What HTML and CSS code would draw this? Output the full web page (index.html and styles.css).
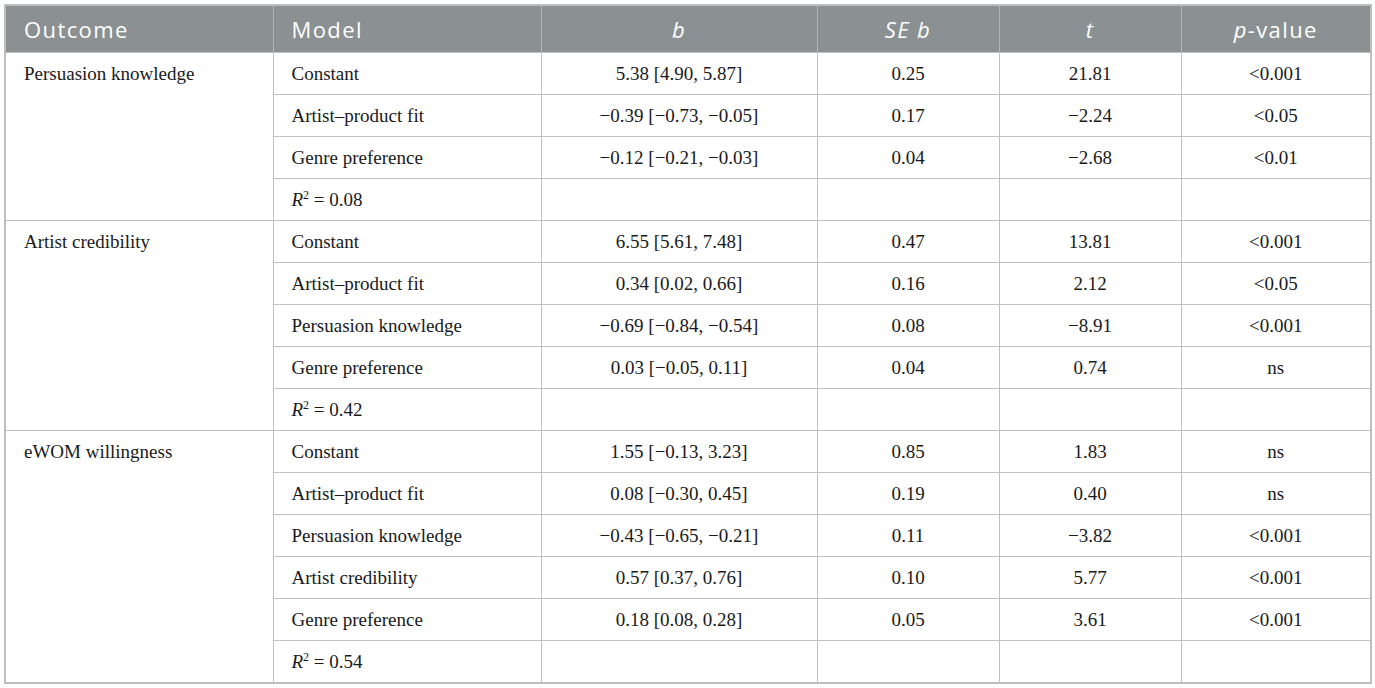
FILE: index.html
```html
<!DOCTYPE html>
<html>
<head>
<meta charset="utf-8">
<link rel="stylesheet" href="styles.css">
</head>
<body>
<table class="results">
  <colgroup>
    <col class="c-outcome"><col class="c-model"><col class="c-b"><col class="c-se"><col class="c-t"><col class="c-p">
  </colgroup>
  <thead>
    <tr>
      <th class="left">Outcome</th>
      <th class="left">Model</th>
      <th><i>b</i></th>
      <th><i>SE b</i></th>
      <th><i>t</i></th>
      <th><i>p</i>-value</th>
    </tr>
  </thead>
  <tbody>
    <tr><td class="outcome" rowspan="4">Persuasion knowledge</td><td class="left">Constant</td><td>5.38 [4.90, 5.87]</td><td>0.25</td><td>21.81</td><td>&lt;0.001</td></tr>
    <tr><td class="left">Artist–product fit</td><td>−0.39 [−0.73, −0.05]</td><td>0.17</td><td>−2.24</td><td>&lt;0.05</td></tr>
    <tr><td class="left">Genre preference</td><td>−0.12 [−0.21, −0.03]</td><td>0.04</td><td>−2.68</td><td>&lt;0.01</td></tr>
    <tr><td class="left"><i>R</i><sup>2</sup> = 0.08</td><td></td><td></td><td></td><td></td></tr>

    <tr><td class="outcome" rowspan="5">Artist credibility</td><td class="left">Constant</td><td>6.55 [5.61, 7.48]</td><td>0.47</td><td>13.81</td><td>&lt;0.001</td></tr>
    <tr><td class="left">Artist–product fit</td><td>0.34 [0.02, 0.66]</td><td>0.16</td><td>2.12</td><td>&lt;0.05</td></tr>
    <tr><td class="left">Persuasion knowledge</td><td>−0.69 [−0.84, −0.54]</td><td>0.08</td><td>−8.91</td><td>&lt;0.001</td></tr>
    <tr><td class="left">Genre preference</td><td>0.03 [−0.05, 0.11]</td><td>0.04</td><td>0.74</td><td>ns</td></tr>
    <tr><td class="left"><i>R</i><sup>2</sup> = 0.42</td><td></td><td></td><td></td><td></td></tr>

    <tr><td class="outcome" rowspan="6">eWOM willingness</td><td class="left">Constant</td><td>1.55 [−0.13, 3.23]</td><td>0.85</td><td>1.83</td><td>ns</td></tr>
    <tr><td class="left">Artist–product fit</td><td>0.08 [−0.30, 0.45]</td><td>0.19</td><td>0.40</td><td>ns</td></tr>
    <tr><td class="left">Persuasion knowledge</td><td>−0.43 [−0.65, −0.21]</td><td>0.11</td><td>−3.82</td><td>&lt;0.001</td></tr>
    <tr><td class="left">Artist credibility</td><td>0.57 [0.37, 0.76]</td><td>0.10</td><td>5.77</td><td>&lt;0.001</td></tr>
    <tr><td class="left">Genre preference</td><td>0.18 [0.08, 0.28]</td><td>0.05</td><td>3.61</td><td>&lt;0.001</td></tr>
    <tr><td class="left"><i>R</i><sup>2</sup> = 0.54</td><td></td><td></td><td></td><td></td></tr>
  </tbody>
</table>
</body>
</html>
```
FILE: styles.css
```css
html, body {
  margin: 0;
  padding: 0;
  background: #ffffff;
}
body {
  padding: 4px 5px 0 4px;
}
.results {
  border-collapse: collapse;
  table-layout: fixed;
  width: 1366px;
  border: 2px solid #bdbfbf;
}
.c-outcome { width: 268px; }
.c-model { width: 268px; }
.c-b { width: 276px; }
.c-se { width: 182px; }
.c-t { width: 182px; }
.c-p { width: 190px; }

.results th {
  background: #8b9093;
  color: #ffffff;
  font-family: "Open Sans", "DejaVu Sans", sans-serif;
  font-weight: 400;
  font-size: 22px;
  letter-spacing: 1.4px;
  height: 46px;
  padding: 0 18px;
  text-align: center;
  border-left: 1px solid #b1b4b6;
  border-bottom: 1px solid #bdbfbf;
}
.results th:first-child { border-left: none; }
.results th.left { text-align: left; }

.results td {
  font-family: "Liberation Serif", "Times New Roman", serif;
  font-size: 19px;
  color: #1a1a1a;
  height: 41px;
  padding: 0 18px;
  text-align: center;
  vertical-align: middle;
  border: 1px solid #c0c2c2;
}
.results td.left { text-align: left; }
.results td.outcome {
  text-align: left;
  vertical-align: top;
  padding-top: 10px;
}
.results sup {
  font-size: 12px;
  line-height: 0;
  vertical-align: 7px;
}
```
